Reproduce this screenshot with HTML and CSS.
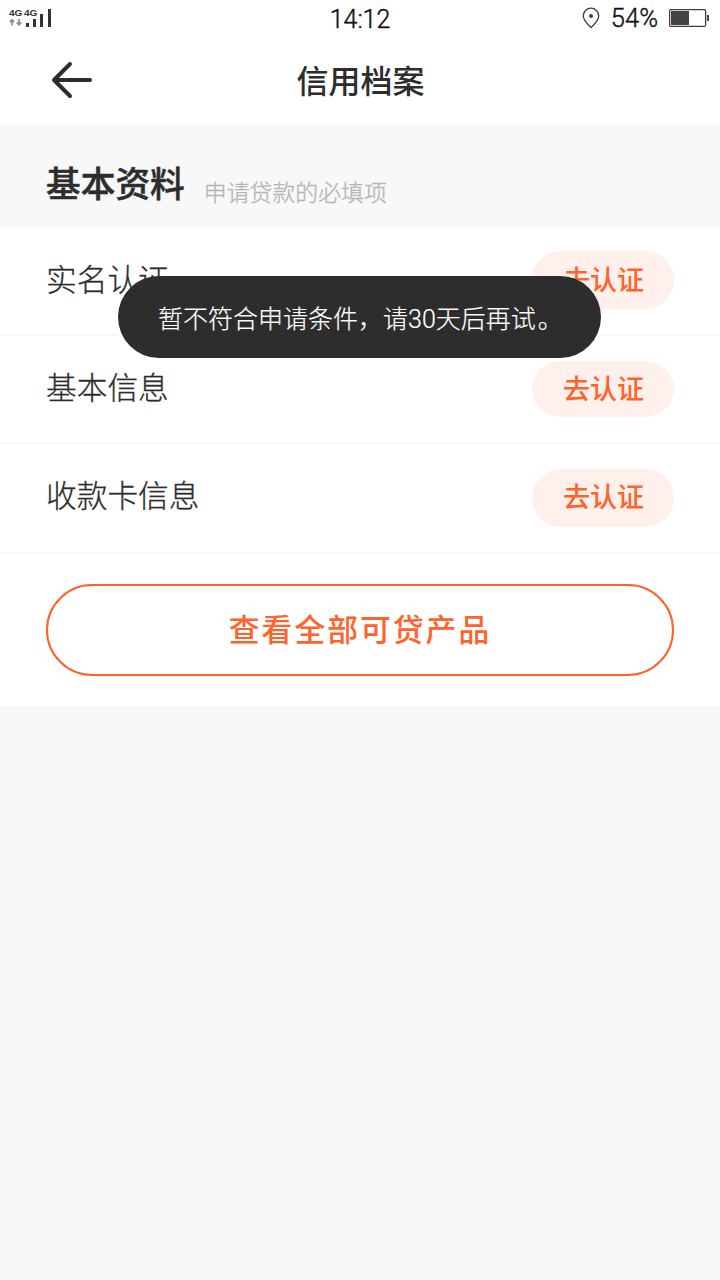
FILE: index.html
```html
<!DOCTYPE html>
<html lang="zh-CN">
<head>
<meta charset="utf-8">
<title>信用档案</title>
<link rel="stylesheet" href="styles.css">
</head>
<body>
<header class="status">
  <svg class="signal" width="46" height="24" viewBox="0 0 46 24">
    <text class="net" x="0" y="9" textLength="13.5" lengthAdjust="spacingAndGlyphs">4G</text>
    <text class="net" x="15" y="9" textLength="13.5" lengthAdjust="spacingAndGlyphs">4G</text>
    <path class="arrows" d="M3 18.500V13M.8 15L3 12.800 5.200 15M10 12v5.500M7.800 15.500l2.200 2.200 2.200-2.200"/>
    <path class="bars" d="M17 16h3v4h-3zM24 12h3v8h-3zM31 7h3v13h-3zM39 2h3v18h-3z"/>
  </svg>
  <span class="clock">14:12</span>
  <div class="power">
    <svg class="place" width="18" height="22" viewBox="0 0 18 22"><path class="pin" d="M9 20.500C6 17.500 1.300 13.500 1.300 8.900a7.700 7.700 0 0 1 15.400 0C16.700 13.500 12 17.500 9 20.500z"/><circle class="dot" cx="9" cy="9" r="2"/></svg>
    <span class="percent">54%</span>
    <svg class="battery" width="41" height="20" viewBox="0 0 41 20"><rect class="case" x=".6" y="1.600" width="36" height="16.800" rx="1.500"/><rect class="charge" x="2" y="3" width="18" height="14"/><rect class="charge" x="38" y="7" width="2" height="6"/></svg>
  </div>
</header>
<nav class="nav">
  <svg class="back" width="44" height="40" viewBox="0 0 44 40"><path d="M20 4L4 20l16 16M4 20h36"/></svg>
  <h1 class="title">信用档案</h1>
</nav>
<section class="section-head">
  <h2 class="heading">基本资料</h2><span class="hint">申请贷款的必填项</span>
</section>
<main class="panel">
  <div class="row first"><span class="label">实名认证</span><button class="verify">去认证</button></div>
  <div class="row second"><span class="label">基本信息</span><button class="verify">去认证</button></div>
  <div class="row third"><span class="label">收款卡信息</span><button class="verify">去认证</button></div>
  <button class="products">查看全部可贷产品</button>
</main>
<div class="toast">暂不符合申请条件，请<span class="days">30</span>天后再试<span class="stop">。</span></div>
</body>
</html>
```

FILE: styles.css
```css
* { box-sizing: border-box; }
body { position: relative; margin: 0; min-height: 1280px; background: #f8f8f8; color: #2d2d2d; font-family: "Noto Sans CJK SC", sans-serif; }
h1, h2 { margin: 0; }
button { font-family: inherit; padding: 0; }
.status { height: 38px; background: #fff; display: grid; grid-template-columns: 1fr auto 1fr; align-items: center; padding: 0 10px 0 9px; }
.net { font: bold 9.500px "Liberation Sans", sans-serif; fill: #333; }
.arrows { fill: none; stroke: #929292; stroke-width: 1.8; }
.bars { fill: #333; }
.clock { font: 300 25px Roboto, sans-serif; color: #111; -webkit-text-stroke: .4px #111; padding-left: 1px; }
.power { display: flex; justify-content: flex-end; align-items: center; height: 36px; margin-top: -2px; }
.place { margin-top: -1px; }
.percent { font: 300 25.500px Roboto, sans-serif; color: #111; -webkit-text-stroke: .4px #111; margin: 0 11px; }
.battery { margin-top: -1px; }
.pin, .case { fill: none; stroke: #3d3d3d; stroke-width: 1.3; }
.charge, .dot { fill: #444; }
.nav { height: 86px; background: #fff; display: grid; grid-template-columns: 94px 1fr 94px; align-items: center; }
.back { margin: -2px 0 0 50px; }
.back path { fill: none; stroke: #2d2d2d; stroke-width: 4; stroke-linecap: round; stroke-linejoin: round; }
.title { text-align: center; font-size: 32px; line-height: 46px; font-weight: 500; padding-left: 1px; margin-top: -4px; }
.section-head { height: 104px; padding: 33px 46px 0; display: flex; align-items: flex-start; }
.heading { font-size: 34.700px; line-height: 50px; font-weight: 500; -webkit-text-stroke: .5px #2d2d2d; }
.hint { margin: 17px 0 0 19px; font-size: 22.900px; line-height: 34px; color: #b5b5b5; font-weight: 300; -webkit-text-stroke: .3px #b5b5b5; }
.panel { height: 478px; background: #fff; }
.row { display: flex; justify-content: space-between; align-items: flex-start; padding: 0 46px; border-bottom: 2px solid #f8f8f8; }
.first { height: 108px; padding-top: 23px; }
.second { height: 108px; padding-top: 25px; }
.third { height: 110px; padding-top: 25px; }
.label { font-size: 30.700px; line-height: 56px; font-weight: 300; -webkit-text-stroke: .3px #2d2d2d; margin-top: -1px; }
.second .label, .third .label { margin-top: -3px; }
.verify { width: 142px; height: 58px; border: 0; border-radius: 29px; background: #fff0eb; color: #ff622b; font-size: 27px; line-height: 54px; font-weight: 500; padding: 0 0 3px 1px; }
.second .verify { height: 56px; padding-bottom: 5px; }
.third .verify { padding-bottom: 7px; }
.products { display: block; width: 628px; height: 92px; margin: 30px auto 0; border: 2px solid #ff622b; border-radius: 46px; background: #fff; color: #ff622b; font-size: 30.800px; font-weight: 500; letter-spacing: 2px; padding-bottom: 5px; }
.toast { position: absolute; left: 118px; top: 276px; width: 483px; height: 82px; padding-left: 40px; border-radius: 41px; background: #2d2d2d; color: #fff; font-size: 25px; line-height: 83px; font-weight: 300; white-space: nowrap; -webkit-text-stroke: .2px #fff; }
.days { font-family: Roboto, sans-serif; }
.stop { margin-left: 2px; }
```
